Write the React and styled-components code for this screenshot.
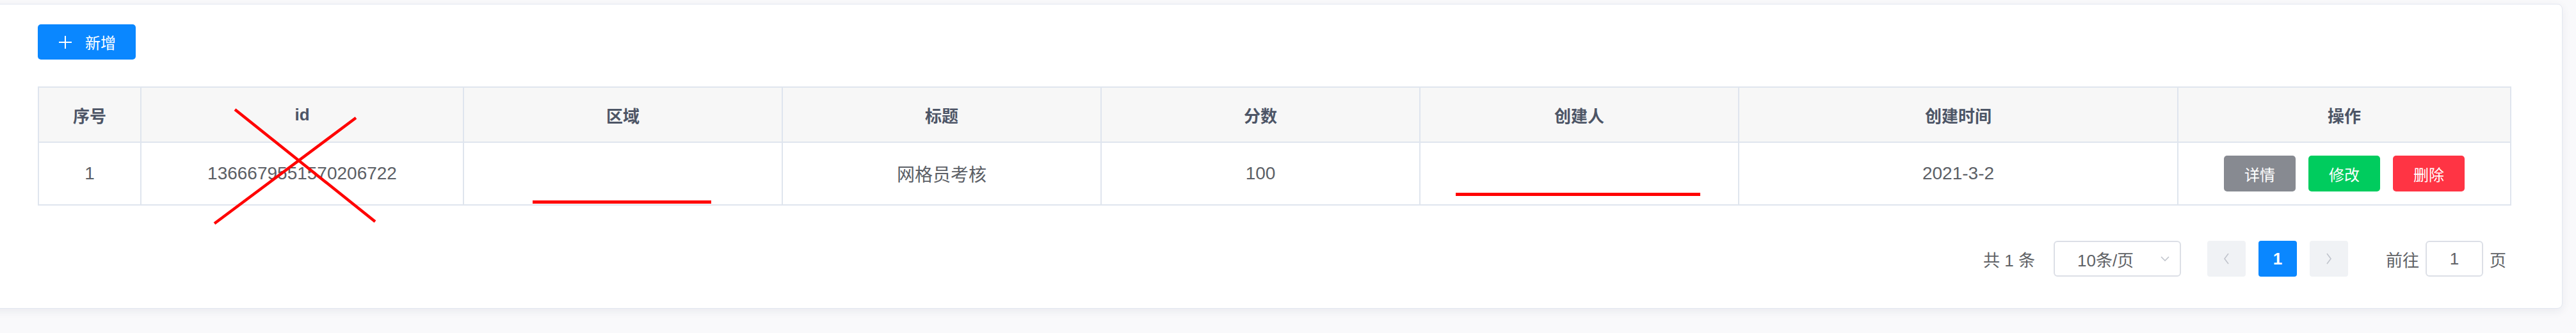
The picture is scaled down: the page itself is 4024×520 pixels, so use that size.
import React from 'react';
import styled, { createGlobalStyle } from 'styled-components';

const GlobalStyle = createGlobalStyle`
  html, body {
    margin: 0;
    padding: 0;
    background: #f9f9fb;
  }
  body {
    font-family: 'Liberation Sans', 'Noto Sans CJK SC', sans-serif;
  }
`;

const Page = styled.div`
  position: relative;
  width: 4024px;
  height: 520px;
  padding: 6px 21px 0 0;
  box-sizing: border-box;
  overflow: hidden;
`;

const Card = styled.div`
  margin-left: -23px;
  background: #fff;
  border: 1px solid #e3e7f0;
  border-radius: 8px;
  box-shadow: 0 4px 14px rgba(30, 40, 80, 0.07);
  padding: 31px 81px 49px;
`;

const AddButton = styled.button`
  display: flex;
  align-items: center;
  gap: 21px;
  width: 153px;
  height: 55px;
  padding: 0 0 0 33px;
  border: none;
  border-radius: 5px;
  background: #0a87ff;
  color: #fff;
  font-family: inherit;
  font-size: 24px;
  cursor: pointer;
`;

const Table = styled.table`
  width: 100%;
  table-layout: fixed;
  border-collapse: collapse;
  margin-top: 42px;
`;

const Th = styled.th`
  height: 84px;
  padding: 0;
  background: #f7f7f7;
  border: 2px solid #dfe5ee;
  font-size: 26px;
  font-weight: 700;
  color: #4d5566;
  text-align: center;
`;

const Td = styled.td`
  height: 96px;
  padding: 0;
  border: 2px solid #dfe5ee;
  font-size: 28px;
  color: #5c5f66;
  text-align: center;
`;

const Actions = styled.div`
  display: flex;
  justify-content: center;
  gap: 20px;
`;

const ActionButton = styled.button`
  width: 112px;
  height: 56px;
  border: none;
  border-radius: 5px;
  background: ${(p) => p.$color};
  color: #fff;
  font-family: inherit;
  font-size: 24px;
  padding: 0;
`;

const Pager = styled.div`
  display: flex;
  justify-content: flex-end;
  align-items: center;
  margin-top: 55px;
  padding-right: 6px;
  font-size: 26px;
  color: #606266;
`;

const Total = styled.span`
  white-space: pre;
`;

const SizeSelect = styled.div`
  display: flex;
  align-items: center;
  justify-content: space-between;
  box-sizing: border-box;
  width: 199px;
  height: 56px;
  margin-left: 29px;
  padding: 0 16px 0 35px;
  border: 2px solid #dcdfe6;
  border-radius: 6px;
`;

const PageBtn = styled.div`
  display: flex;
  align-items: center;
  justify-content: center;
  width: 60px;
  height: 56px;
  margin-left: ${(p) => p.$gap}px;
  border-radius: 4px;
  background: ${(p) => (p.$active ? '#0a87ff' : '#f0f2f5')};
  color: #fff;
  font-weight: 700;
`;

const GotoLabel = styled.span`
  margin-left: ${(p) => p.$gap}px;
`;

const GotoInput = styled.div`
  display: flex;
  align-items: center;
  justify-content: center;
  box-sizing: border-box;
  width: 90px;
  height: 56px;
  margin: 0 10px;
  border: 2px solid #dcdfe6;
  border-radius: 6px;
`;

const Marks = styled.svg`
  position: absolute;
  top: 0;
  left: 0;
  pointer-events: none;
`;

const cols = [160, 504, 498, 498, 498, 498, 686, 520];
const heads = ['序号', 'id', '区域', '标题', '分数', '创建人', '创建时间', '操作'];

const Chevron = ({ dir }) => {
  const pts = {
    down: '1,1 7,7 13,1',
    left: '9,1 3,9 9,17',
    right: '3,1 9,9 3,17',
  }[dir];
  const w = dir === 'down' ? 14 : 12;
  const h = dir === 'down' ? 8 : 18;
  return (
    <svg width={w} height={h} viewBox={`0 0 ${w} ${h}`}>
      <polyline points={pts} fill="none" stroke="#c0c4cc" strokeWidth="1.6" />
    </svg>
  );
};

const App = () => (
  <Page>
    <GlobalStyle />
    <Card>
      <AddButton>
        <svg width="20" height="20" viewBox="0 0 20 20">
          <path d="M10 0v20M0 10h20" stroke="#fff" strokeWidth="2" />
        </svg>
        新增
      </AddButton>
      <Table>
        <colgroup>
          {cols.map((w, i) => (
            <col key={i} style={{ width: w }} />
          ))}
        </colgroup>
        <thead>
          <tr>
            {heads.map((h) => (
              <Th key={h}>{h}</Th>
            ))}
          </tr>
        </thead>
        <tbody>
          <tr>
            <Td>1</Td>
            <Td>1366679551570206722</Td>
            <Td />
            <Td>网格员考核</Td>
            <Td>100</Td>
            <Td />
            <Td>2021-3-2</Td>
            <Td>
              <Actions>
                <ActionButton $color="#878a91">详情</ActionButton>
                <ActionButton $color="#00cc5e">修改</ActionButton>
                <ActionButton $color="#ff3444">删除</ActionButton>
              </Actions>
            </Td>
          </tr>
        </tbody>
      </Table>
      <Pager>
        <Total>共 1 条</Total>
        <SizeSelect>
          <span>10条/页</span>
          <Chevron dir="down" />
        </SizeSelect>
        <PageBtn $gap={41}>
          <Chevron dir="left" />
        </PageBtn>
        <PageBtn $gap={20} $active>
          1
        </PageBtn>
        <PageBtn $gap={20}>
          <Chevron dir="right" />
        </PageBtn>
        <GotoLabel $gap={59}>前往</GotoLabel>
        <GotoInput>1</GotoInput>
        <span>页</span>
      </Pager>
    </Card>
    <Marks width="4024" height="520" viewBox="0 0 4024 520">
      <line x1="367" y1="171" x2="586" y2="346" stroke="#ff0000" strokeWidth="4.5" />
      <line x1="556" y1="184" x2="335" y2="349" stroke="#ff0000" strokeWidth="4.5" />
      <rect x="832" y="313" width="279" height="5" fill="#ff0000" />
      <rect x="2274" y="301" width="382" height="5" fill="#ff0000" />
    </Marks>
  </Page>
);

export default App;
